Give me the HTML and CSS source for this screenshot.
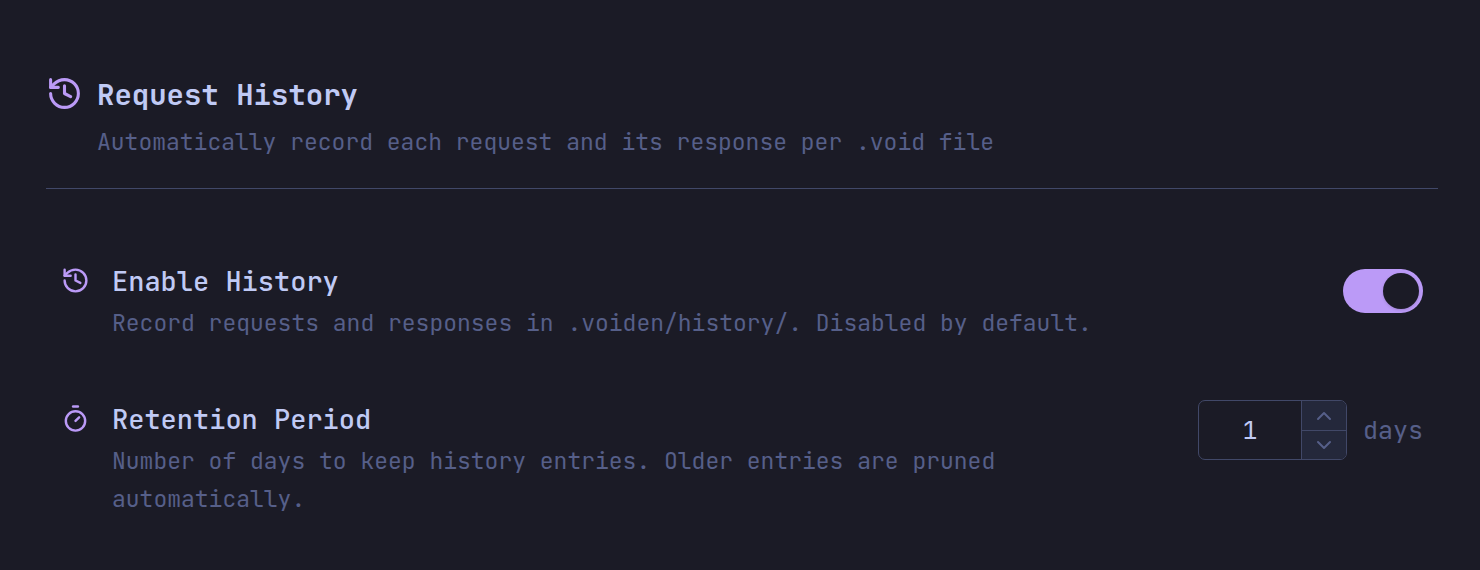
FILE: index.html
```html
<!DOCTYPE html>
<html lang="en">
<head>
    <meta charset="UTF-8">
    <meta name="viewport" content="width=device-width, initial-scale=1.0">
    <link rel="stylesheet" href="styles.css">
    <title>Request History</title>
</head>
<body>
    <main class="settings">
        <header class="settings-header">
            <svg class="icon icon-large" viewBox="0 0 24 24" aria-hidden="true">
                <path d="M3 12a9 9 0 1 0 9-9 9.75 9.75 0 0 0-6.74 2.74L3 8" />
                <path d="M3 3v5h5" />
                <path d="M12 7v5l4 2" />
            </svg>
            <div class="header-text">
                <h1>Request History</h1>
                <p class="desc">Automatically record each request and its response per .void file</p>
            </div>
        </header>
        <section class="rows">
            <div class="row">
                <svg class="icon" viewBox="0 0 24 24" aria-hidden="true">
                    <path d="M3 12a9 9 0 1 0 9-9 9.75 9.75 0 0 0-6.74 2.74L3 8" />
                    <path d="M3 3v5h5" />
                    <path d="M12 7v5l4 2" />
                </svg>
                <div class="row-text">
                    <label class="row-title" for="enableHistory">Enable History</label>
                    <p class="desc">Record requests and responses in .voiden/history/. Disabled by default.</p>
                </div>
                <input class="toggle" type="checkbox" role="switch" id="enableHistory" checked>
            </div>
            <div class="row">
                <svg class="icon" viewBox="0 0 24 24" aria-hidden="true">
                    <path d="M10 2h4" />
                    <path d="M12 14l3-3" />
                    <circle cx="12" cy="14" r="8" />
                </svg>
                <div class="row-text">
                    <label class="row-title" for="retention">Retention Period</label>
                    <p class="desc">Number of days to keep history entries. Older entries are pruned automatically.</p>
                </div>
                <div class="period">
                    <div class="stepper">
                        <input class="stepper-value" type="number" id="retention" min="1" value="1">
                        <div class="stepper-buttons">
                            <button type="button" id="stepUp" aria-label="Increase">
                                <svg class="chevron" viewBox="0 0 24 24" aria-hidden="true"><path d="M18 15l-6-6-6 6" /></svg>
                            </button>
                            <button type="button" id="stepDown" aria-label="Decrease">
                                <svg class="chevron" viewBox="0 0 24 24" aria-hidden="true"><path d="M6 9l6 6 6-6" /></svg>
                            </button>
                        </div>
                    </div>
                    <span class="unit">days</span>
                </div>
            </div>
        </section>
    </main>
    <script>
        const retention = document.querySelector('#retention');
        document.querySelector('#stepUp').addEventListener('click', () => retention.stepUp());
        document.querySelector('#stepDown').addEventListener('click', () => retention.stepDown());
    </script>
</body>
</html>
```
FILE: styles.css
```css
* { box-sizing: border-box; }
body {
    margin: 0;
    background-color: #1b1b26;
    color: #c0caf5;
    font-family: "JetBrains Mono", "DejaVu Sans Mono", monospace;
}
h1, p { margin: 0; }
.settings { padding: 71px 42px 40px 46px; }

/* header */
.settings-header {
    display: flex;
    gap: 14px;
    padding-bottom: 27px;
    border-bottom: 1px solid #414868;
}
h1 {
    font-size: 29px;
    font-weight: 600;
    line-height: 48px;
}
.desc {
    margin-top: 4px;
    color: #565f89;
    font-size: 23px;
    line-height: 38px;
}

/* icons */
.icon {
    flex: none;
    width: 29px;
    height: 29px;
    margin-top: 4px;
    fill: none;
    stroke: #bb9af7;
    stroke-width: 2;
    stroke-linecap: round;
    stroke-linejoin: round;
}
.icon-large {
    width: 37px;
    height: 37px;
}

/* setting rows */
.rows {
    display: grid;
    gap: 58px;
    padding: 73px 15px 0;
}
.row {
    display: flex;
    align-items: flex-start;
    gap: 22px;
}
.row-text {
    flex: 1;
    min-width: 0;
}
.row-title {
    display: block;
    font-size: 27px;
    font-weight: 500;
    line-height: 38px;
}

/* toggle */
.toggle {
    appearance: none;
    flex: none;
    display: flex;
    justify-content: flex-end;
    width: 80px;
    height: 44px;
    margin: 7px 0 0;
    padding: 4px;
    border-radius: 22px;
    background-color: #bb9af7;
}
.toggle::before {
    content: "";
    width: 36px;
    height: 36px;
    border-radius: 50%;
    background-color: #1b1b26;
    box-shadow: 0 1px 3px rgba(0, 0, 0, .15);
}
.toggle:not(:checked) {
    justify-content: flex-start;
    background-color: #414868;
}

/* number stepper */
.period {
    display: flex;
    align-items: center;
    gap: 16px;
}
.stepper {
    display: flex;
    height: 60px;
    border: 1px solid #414868;
    border-radius: 7px;
    overflow: hidden;
}
.stepper-value {
    appearance: textfield;
    width: 102px;
    padding: 0;
    border: 0;
    background: none;
    color: inherit;
    font: inherit;
    font-size: 25px;
    text-align: center;
}
.stepper-value::-webkit-inner-spin-button { appearance: none; }
.stepper-buttons {
    display: grid;
    grid-template-rows: 1fr 1fr;
    width: 45px;
    border-left: 1px solid #414868;
}
.stepper-buttons button {
    display: grid;
    place-items: center;
    padding: 0;
    border: 0;
    background-color: #24283b;
}
.stepper-buttons button + button { border-top: 1px solid #414868; }
.chevron {
    width: 24px;
    height: 24px;
    fill: none;
    stroke: #565f89;
    stroke-width: 2;
    stroke-linecap: round;
    stroke-linejoin: round;
}
.unit {
    color: #565f89;
    font-size: 25px;
}
```
